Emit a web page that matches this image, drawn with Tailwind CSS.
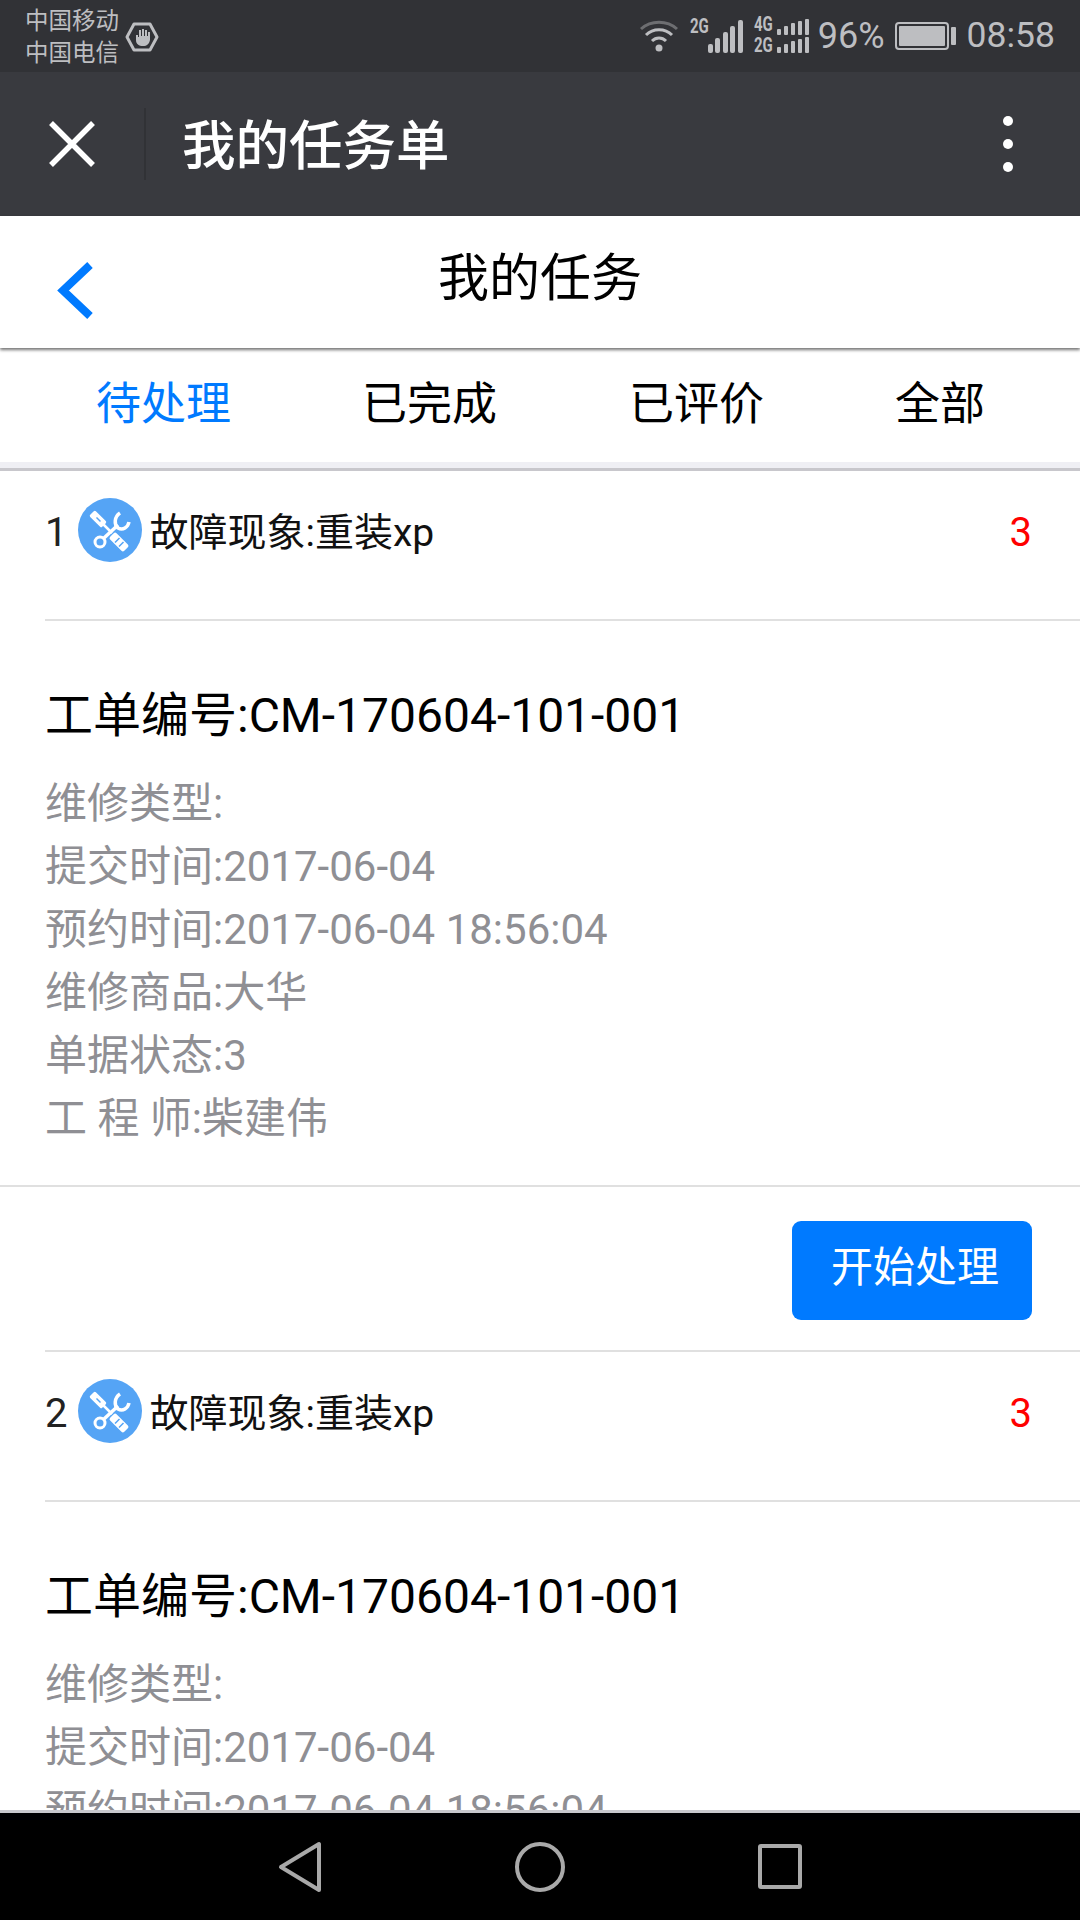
<!DOCTYPE html>
<html lang="zh-CN">
<head>
    <meta charset="UTF-8">
    <meta name="viewport" content="width=device-width, initial-scale=1.0">
    <title>我的任务单</title>
    <script src="https://cdn.jsdelivr.net/npm/@tailwindcss/browser@4"></script>
</head>
<body class="bg-white font-['Roboto','Noto_Sans_CJK_SC',sans-serif]">
    <div class="w-[1080px] h-[1920px] flex flex-col overflow-hidden">
        <!-- status bar -->
        <div class="h-[72px] shrink-0 bg-[#313236] flex items-center text-[#bdbec1]">
            <div class="ml-[25px] mt-[2px] text-[23.5px] leading-[32px]">
                <div>中国移动</div>
                <div>中国电信</div>
            </div>
            <svg class="ml-[6px] mt-[1px]" width="34" height="30" viewBox="0 0 34 30">
                <path d="M9 2H25L32 15L25 28H9L2 15Z" fill="none" stroke="#bdbec1" stroke-width="3" stroke-linejoin="round"/>
                <path d="M11 13V18C11 22 14 24 18 24C22 24 24 22 25 18V10H23V14H22V8H20V14H19V7H17V14H16V8H14V15H13V13Z" fill="#bdbec1"/>
            </svg>
            <div class="ml-auto flex items-center">
                <svg width="40" height="34" viewBox="0 0 40 34">
                    <path d="M2 10C12 1 28 1 38 10" fill="none" stroke="#6d6e71" stroke-width="3"/>
                    <path d="M7 16C14 9 26 9 33 16M13 22C17 18 23 18 27 22" fill="none" stroke="#bdbec1" stroke-width="3"/>
                    <circle cx="20" cy="29" r="3.5" fill="#bdbec1"/>
                </svg>
                <div class="ml-[11px] w-[52px] h-[34px] relative">
                    <span class="absolute left-0 top-[-3px] text-[20px] font-bold leading-[20px] origin-left scale-x-75">2G</span>
                    <div class="absolute left-[18px] bottom-0 flex items-end gap-[2.5px]">
                        <i class="block w-[5px] h-[9px] bg-[#bdbec1] rounded-[2px]"></i>
                        <i class="block w-[5px] h-[15px] bg-[#bdbec1] rounded-[2px]"></i>
                        <i class="block w-[5px] h-[21px] bg-[#bdbec1] rounded-[2px]"></i>
                        <i class="block w-[5px] h-[27px] bg-[#bdbec1] rounded-[2px]"></i>
                        <i class="block w-[5px] h-[33px] bg-[#bdbec1] rounded-[2px]"></i>
                    </div>
                </div>
                <div class="ml-[12px] w-[57px] h-[34px] relative">
                    <span class="absolute left-0 top-[-3px] text-[20px] font-bold leading-[17px] origin-left scale-x-75">4G</span>
                    <span class="absolute left-0 top-[18px] text-[20px] font-bold leading-[17px] origin-left scale-x-75">2G</span>
                    <div class="absolute left-[23px] top-0 flex items-end gap-[3px] h-[16px]">
                        <i class="block w-[4px] h-[6px] bg-[#bdbec1] rounded-[1px]"></i>
                        <i class="block w-[4px] h-[9px] bg-[#bdbec1] rounded-[1px]"></i>
                        <i class="block w-[4px] h-[12px] bg-[#bdbec1] rounded-[1px]"></i>
                        <i class="block w-[4px] h-[14px] bg-[#bdbec1] rounded-[1px]"></i>
                        <i class="block w-[4px] h-[16px] bg-[#bdbec1] rounded-[1px]"></i>
                    </div>
                    <div class="absolute left-[23px] bottom-0 flex items-end gap-[3px] h-[16px]">
                        <i class="block w-[4px] h-[6px] bg-[#bdbec1] rounded-[1px]"></i>
                        <i class="block w-[4px] h-[9px] bg-[#bdbec1] rounded-[1px]"></i>
                        <i class="block w-[4px] h-[12px] bg-[#bdbec1] rounded-[1px]"></i>
                        <i class="block w-[4px] h-[14px] bg-[#bdbec1] rounded-[1px]"></i>
                        <i class="block w-[4px] h-[16px] bg-[#bdbec1] rounded-[1px]"></i>
                    </div>
                </div>
                <span class="ml-[7px] text-[36px] leading-none">96%</span>
                <div class="ml-[10px] flex items-center">
                    <div class="w-[54px] h-[28px] border-2 border-[#bdbec1] rounded-[4px] p-[2px]">
                        <div class="w-full h-full bg-[#bdbec1] rounded-[1px]"></div>
                    </div>
                    <div class="ml-[2px] w-[5px] h-[18px] bg-[#bdbec1] rounded-[1px]"></div>
                </div>
                <span class="ml-[11px] mr-[25px] text-[35.5px] leading-none">08:58</span>
            </div>
        </div>
        <!-- wechat title bar -->
        <div class="h-[144px] shrink-0 bg-[#393a3f] flex items-center text-white">
            <svg class="ml-[48px]" width="48" height="48" viewBox="0 0 48 48">
                <path d="M3 3L45 45M45 3L3 45" stroke="#fff" stroke-width="5.5"/>
            </svg>
            <div class="ml-[48px] w-[2px] h-[72px] bg-[#313236]"></div>
            <span class="ml-[36px] mt-[5px] text-[53.5px] font-medium leading-none">我的任务单</span>
            <div class="ml-auto mr-[67px] flex flex-col gap-[13px]">
                <i class="block w-[10px] h-[10px] rounded-full bg-white"></i>
                <i class="block w-[10px] h-[10px] rounded-full bg-white"></i>
                <i class="block w-[10px] h-[10px] rounded-full bg-white"></i>
            </div>
        </div>
        <!-- page header -->
        <div class="h-[132px] shrink-0 bg-white relative z-10 shadow-[0_2px_3px_rgba(0,0,0,0.55)] flex items-center justify-center">
            <svg class="absolute left-[57px] top-[45px]" width="38" height="60" viewBox="0 0 38 60">
                <path d="M33 4L6 29.5L33 55" fill="none" stroke="#007aff" stroke-width="8"/>
            </svg>
            <span class="text-[51px] leading-none text-black -mt-[8px]">我的任务</span>
        </div>
        <!-- tabs -->
        <div class="h-[114px] shrink-0 bg-white flex items-center text-[45px] text-black">
            <span class="ml-[96px] text-[#007aff]">待处理</span>
            <span class="ml-[131px]">已完成</span>
            <span class="ml-[132px]">已评价</span>
            <span class="ml-[131px]">全部</span>
        </div>
        <div class="h-[9px] shrink-0 bg-[#efeff4] border-b-[3px] border-[#c8c7cc]"></div>
        <!-- task list -->
        <div class="flex-1 min-h-0 overflow-hidden">
            <div>
                <div class="h-[150px] ml-[45px] pr-[48px] border-b-2 border-[#e0e0e0] flex items-start pt-[27px]">
                    <span class="mt-[3px] text-[40px] leading-[64px] text-[#222]">1</span>
                    <svg class="ml-[11px]" width="64" height="64" viewBox="0 0 64 64">
                        <circle cx="32" cy="32" r="32" fill="#55a4f5"/>
                        <rect x="-4" y="-8.5" width="8" height="17" rx="1.5" transform="translate(20 21) rotate(-45)" fill="#fff"/>
                        <path d="M18.5 19.5L22.5 23.5" stroke="#55a4f5" stroke-width="1.5"/>
                        <path d="M25 26L34 35" stroke="#fff" stroke-width="2.5"/>
                        <path d="M26 40L40 27" stroke="#fff" stroke-width="3.5"/>
                        <circle cx="22" cy="44" r="5" fill="#55a4f5" stroke="#fff" stroke-width="3"/>
                        <path d="M42 15C36 19 36 27 40 30C45 33 50 29 51 24" fill="none" stroke="#fff" stroke-width="3.5"/>
                        <rect x="-4.5" y="-10" width="9" height="20" rx="2" transform="translate(41 44) rotate(-45)" fill="#fff"/>
                        <path d="M37 44.5L41.5 40M41 48.5L45.5 44" stroke="#55a4f5" stroke-width="1.5"/>
                    </svg>
                    <span class="ml-[7px] mt-[3px] text-[39px] leading-[64px] text-[#111]">故障现象:重装xp</span>
                    <span class="ml-auto mt-[3px] text-[40px] leading-[64px] text-[#ff0000]">3</span>
                </div>
                <div class="h-[566px] pl-[45px] border-b-2 border-[#e0e0e0] pt-[63px]">
                    <div class="text-[48px] leading-[64px] text-black">工单编号:CM-170604-101-001</div>
                    <div class="mt-[24px] text-[42px] leading-[63px] text-[#8f8f94]">
                        <div>维修类型:</div>
                        <div>提交时间:2017-06-04</div>
                        <div>预约时间:2017-06-04 18:56:04</div>
                        <div>维修商品:大华</div>
                        <div>单据状态:3</div>
                        <div>工 程 师:柴建伟</div>
                    </div>
                </div>
                <div class="h-[165px] pt-[34px] pr-[48px] ml-[45px] border-b-2 border-[#e0e0e0] flex justify-end items-start">
                    <button class="w-[240px] h-[99px] pb-[6px] pl-[6px] rounded-[9px] bg-[#007aff] text-white text-[42px]">开始处理</button>
                </div>
            </div>
            <div>
                <div class="h-[150px] ml-[45px] pr-[48px] border-b-2 border-[#e0e0e0] flex items-start pt-[27px]">
                    <span class="mt-[3px] text-[40px] leading-[64px] text-[#222]">2</span>
                    <svg class="ml-[11px]" width="64" height="64" viewBox="0 0 64 64">
                        <circle cx="32" cy="32" r="32" fill="#55a4f5"/>
                        <rect x="-4" y="-8.5" width="8" height="17" rx="1.5" transform="translate(20 21) rotate(-45)" fill="#fff"/>
                        <path d="M18.5 19.5L22.5 23.5" stroke="#55a4f5" stroke-width="1.5"/>
                        <path d="M25 26L34 35" stroke="#fff" stroke-width="2.5"/>
                        <path d="M26 40L40 27" stroke="#fff" stroke-width="3.5"/>
                        <circle cx="22" cy="44" r="5" fill="#55a4f5" stroke="#fff" stroke-width="3"/>
                        <path d="M42 15C36 19 36 27 40 30C45 33 50 29 51 24" fill="none" stroke="#fff" stroke-width="3.5"/>
                        <rect x="-4.5" y="-10" width="9" height="20" rx="2" transform="translate(41 44) rotate(-45)" fill="#fff"/>
                        <path d="M37 44.5L41.5 40M41 48.5L45.5 44" stroke="#55a4f5" stroke-width="1.5"/>
                    </svg>
                    <span class="ml-[7px] mt-[3px] text-[39px] leading-[64px] text-[#111]">故障现象:重装xp</span>
                    <span class="ml-auto mt-[3px] text-[40px] leading-[64px] text-[#ff0000]">3</span>
                </div>
                <div class="pl-[45px] pt-[63px]">
                    <div class="text-[48px] leading-[64px] text-black">工单编号:CM-170604-101-001</div>
                    <div class="mt-[24px] text-[42px] leading-[63px] text-[#8f8f94]">
                        <div>维修类型:</div>
                        <div>提交时间:2017-06-04</div>
                        <div>预约时间:2017-06-04 18:56:04</div>
                        <div>维修商品:大华</div>
                    </div>
                </div>
            </div>
        </div>
        <!-- android nav bar -->
        <div class="h-[110px] shrink-0 bg-black border-t-[3px] border-[#c9c9cc] -mt-[3px] relative">
            <svg class="absolute left-[278px] top-[28px]" width="46" height="52" viewBox="0 0 46 52">
                <path d="M41 3V49L3 26Z" fill="none" stroke="#a9a9a9" stroke-width="4" stroke-linejoin="round"/>
            </svg>
            <div class="absolute left-[515px] top-[29px] w-[50px] h-[50px] rounded-full border-[4px] border-[#a9a9a9]"></div>
            <div class="absolute left-[758px] top-[31px] w-[44px] h-[45px] rounded-[3px] border-[4px] border-[#a9a9a9]"></div>
        </div>
    </div>
</body>
</html>
